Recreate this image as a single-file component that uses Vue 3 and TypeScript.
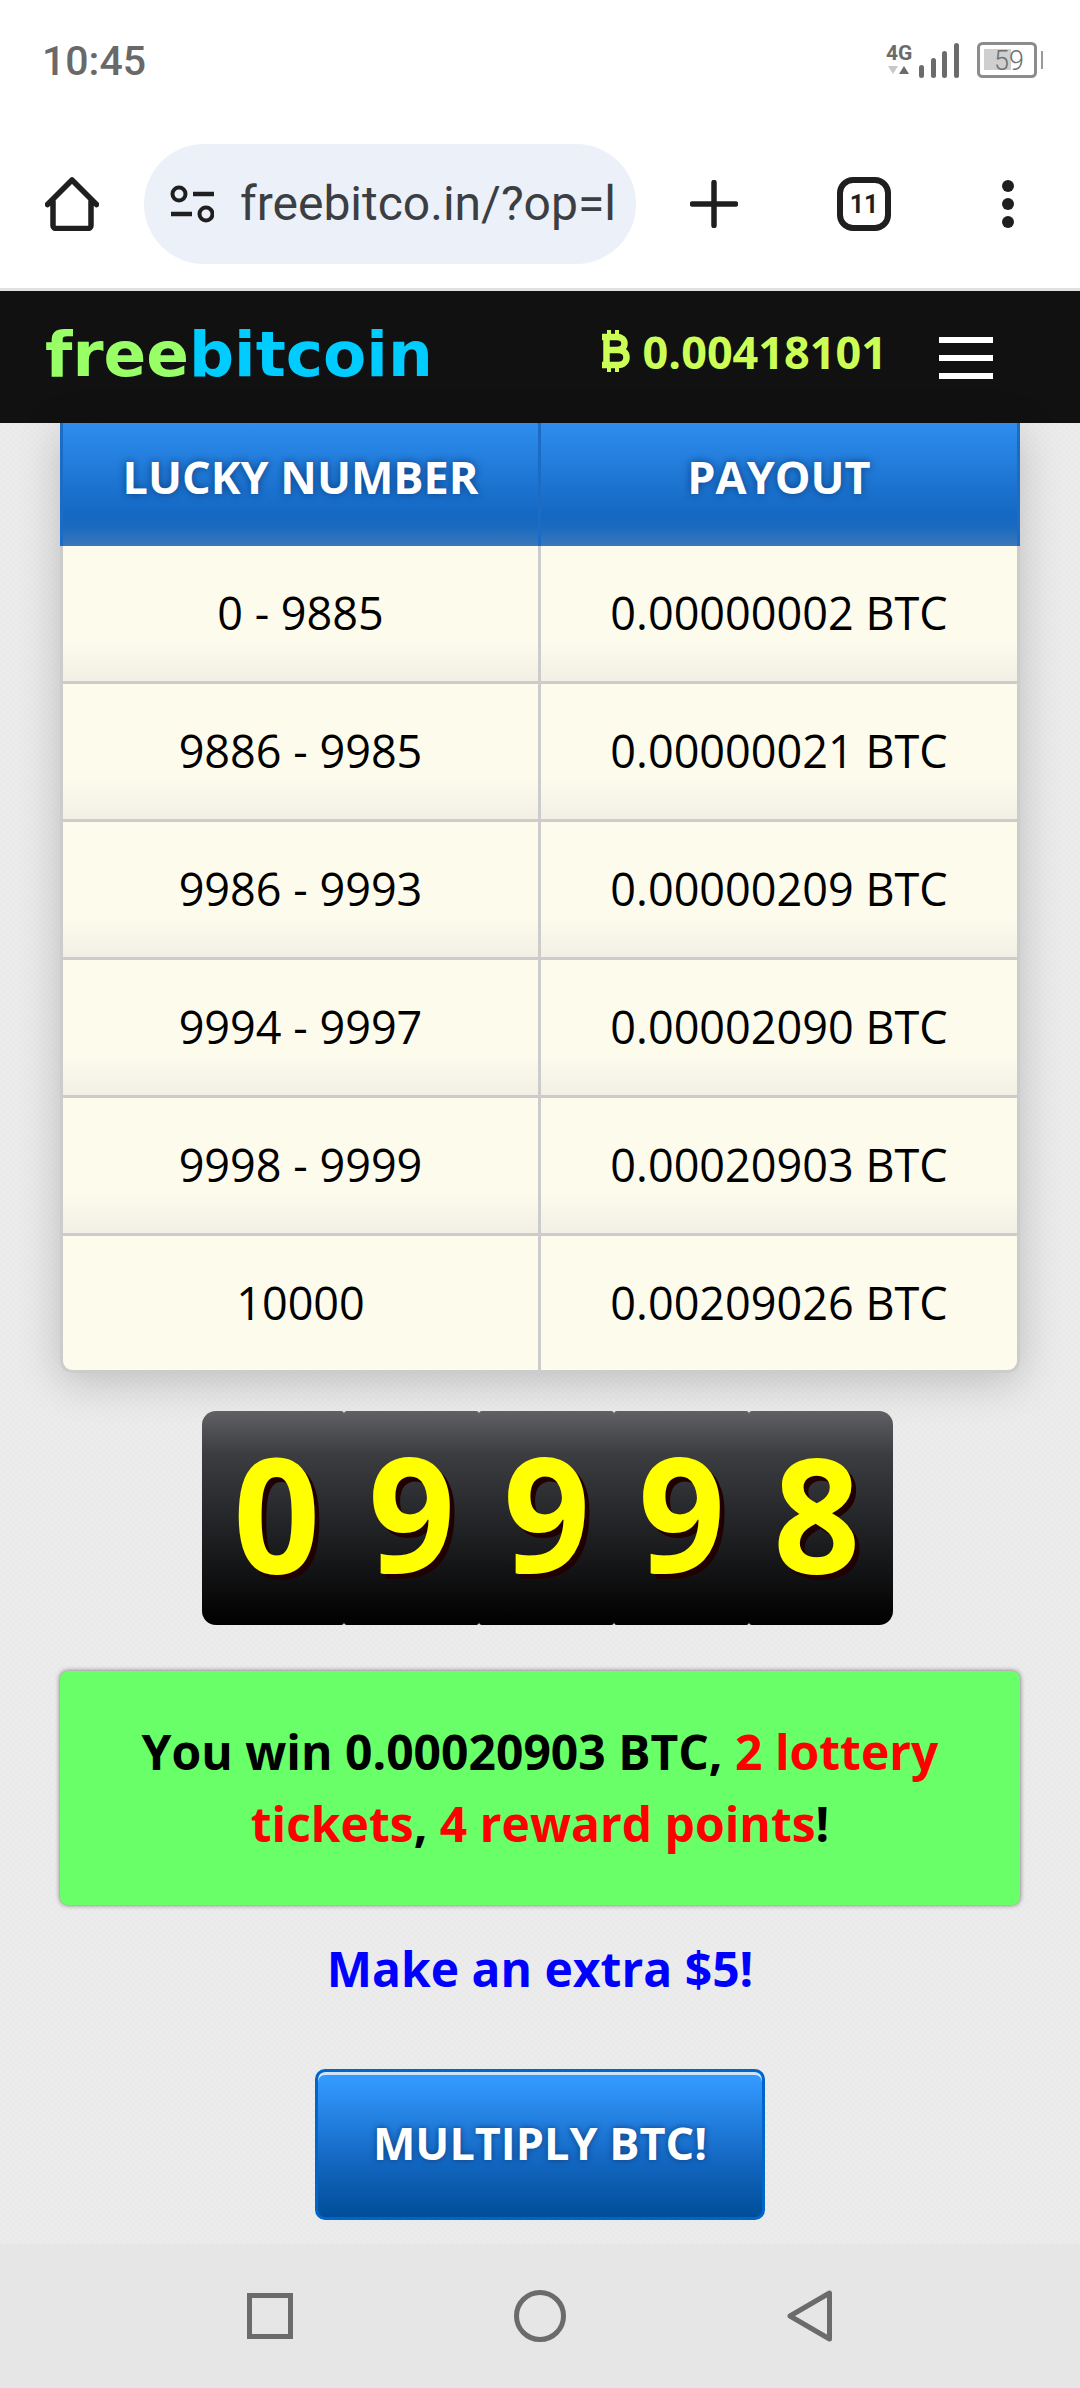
<script setup lang="ts">
interface PayoutRow {
  range: string
  payout: string
}

const rows: PayoutRow[] = [
  { range: '0 - 9885', payout: '0.00000002 BTC' },
  { range: '9886 - 9985', payout: '0.00000021 BTC' },
  { range: '9986 - 9993', payout: '0.00000209 BTC' },
  { range: '9994 - 9997', payout: '0.00002090 BTC' },
  { range: '9998 - 9999', payout: '0.00020903 BTC' },
  { range: '10000', payout: '0.00209026 BTC' },
]

const digits: string[] = ['0', '9', '9', '9', '8']
</script>

<template>
  <div class="phone">
    <div class="status">
      <span class="time">10:45</span>
      <svg class="status-icons" width="160" height="40" viewBox="0 0 160 40">
        <text x="2" y="21" class="net">4G</text>
        <path d="M4 27h10l-5 8z" fill="#c8c8c8" />
        <path d="M15 35l5-8 5 8z" fill="#6b6b6b" />
        <rect x="35" y="26" width="5" height="13" rx="2.5" fill="#6b6b6b" />
        <rect x="47" y="19" width="5" height="20" rx="2.5" fill="#6b6b6b" />
        <rect x="58" y="12" width="5" height="27" rx="2.5" fill="#6b6b6b" />
        <rect x="70" y="4" width="5" height="35" rx="2.5" fill="#6b6b6b" />
        <rect x="94.500" y="4.500" width="57" height="33" rx="4" fill="none" stroke="#8c8c8c" stroke-width="3" />
        <rect x="100" y="10" width="27" height="21" fill="#cfcfcf" />
        <text x="110" y="31" class="batt">59</text>
        <rect x="157" y="12" width="2" height="18" fill="#9a9a9a" />
      </svg>
    </div>

    <div class="toolbar">
      <svg class="home" width="54" height="54" viewBox="0 0 54 54">
        <path d="M2.500 27.500 27 3l24.500 24.500M8 24v24.500a3 3 0 0 0 3 3h32a3 3 0 0 0 3-3V24" fill="none" stroke="#1f1f1f" stroke-width="5.500" stroke-linecap="round" stroke-linejoin="round" />
      </svg>
      <div class="pill">
        <svg width="44" height="38" viewBox="0 0 44 38">
          <circle cx="9" cy="9" r="6.500" fill="none" stroke="#1f1f1f" stroke-width="4" />
          <path d="M23 9h21M1 29h21" stroke="#1f1f1f" stroke-width="4.500" />
          <circle cx="36" cy="29" r="6.500" fill="none" stroke="#1f1f1f" stroke-width="4" />
        </svg>
        <span class="url">freebitco.in/?op=l</span>
      </div>
      <svg class="plus" width="48" height="48" viewBox="0 0 48 48">
        <path d="M2.500 24h43M24 2.500v43" stroke="#1f1f1f" stroke-width="5.500" stroke-linecap="round" />
      </svg>
      <div class="tabs">11</div>
      <svg class="dots" width="12" height="48" viewBox="0 0 12 48">
        <circle cx="6" cy="6" r="6" fill="#1f1f1f" />
        <circle cx="6" cy="24" r="6" fill="#1f1f1f" />
        <circle cx="6" cy="42" r="6" fill="#1f1f1f" />
      </svg>
    </div>

    <header class="site-head">
      <div class="logo"><span class="free">free</span><span class="bitcoin">bitcoin</span></div>
      <div class="balance">
        <svg width="31" height="42" viewBox="0 0 31 42">
          <path d="M3 7h14.500c5 0 8 2.500 8 6.500s-3 6.500-8 6.500H7.500M7.500 20h11.500c5.500 0 8.500 2.800 8.500 7.200s-3 7.800-8.500 7.800H3M7.500 7v28" fill="none" stroke="#ccff55" stroke-width="6.500" />
          <path d="M10 0v7M18 0v7M10 35v7M18 35v7" stroke="#ccff55" stroke-width="4" />
        </svg>
        <span>0.00418101</span>
      </div>
      <div class="burger"><i></i><i></i><i></i></div>
    </header>

    <main class="content">
      <table class="payouts">
        <thead>
          <tr>
            <th>LUCKY NUMBER</th>
            <th>PAYOUT</th>
          </tr>
        </thead>
        <tbody>
          <tr v-for="row in rows" :key="row.range">
            <td>{{ row.range }}</td>
            <td>{{ row.payout }}</td>
          </tr>
        </tbody>
      </table>

      <div class="reel">
        <div v-for="(d, i) in digits" :key="i" class="digit"><span>{{ d }}</span></div>
      </div>

      <div class="win">
        You win 0.00020903 BTC, <span class="red">2 lottery tickets</span>, <span class="red">4 reward points</span>!
      </div>

      <a class="extra">Make an extra $5!</a>

      <button class="multiply">MULTIPLY BTC!</button>
    </main>

    <nav class="navbar">
      <svg width="46" height="46" viewBox="0 0 46 46">
        <rect x="2.500" y="2.500" width="41" height="41" fill="none" stroke="#6b6b6b" stroke-width="5" />
      </svg>
      <svg width="52" height="52" viewBox="0 0 52 52">
        <circle cx="26" cy="26" r="23.500" fill="none" stroke="#6b6b6b" stroke-width="5" />
      </svg>
      <svg width="46" height="52" viewBox="0 0 46 52">
        <path d="M42.500 3v46L3 26z" fill="none" stroke="#6b6b6b" stroke-width="5" stroke-linejoin="round" />
      </svg>
    </nav>
  </div>
</template>

<style>
html,
body {
  margin: 0;
  background: #ebebeb;
}
</style>

<style scoped>
.phone {
  width: 1080px;
  height: 2388px;
  display: flex;
  flex-direction: column;
  overflow: hidden;
  font-family: "Open Sans", sans-serif;
  background: #fff;
}

.status {
  height: 144px;
  flex: none;
  box-sizing: border-box;
  padding: 39px 36px 0 42px;
  display: flex;
  justify-content: space-between;
  align-items: flex-start;
}

.time {
  font: 500 41px/44px Roboto, sans-serif;
  color: #696969;
}

.net {
  font: 700 21px Roboto, sans-serif;
  fill: #6b6b6b;
}

.batt {
  font: 300 27px Roboto, sans-serif;
  fill: #6f6f6f;
}

.toolbar {
  height: 147px;
  flex: none;
  box-sizing: border-box;
  border-bottom: 3px solid #e0e0e0;
  padding: 0 66px 24px 45px;
  display: flex;
  align-items: center;
}

.pill {
  width: 492px;
  height: 120px;
  margin-left: 45px;
  box-sizing: border-box;
  padding-left: 26px;
  border-radius: 60px;
  background: #ecf0f9;
  display: flex;
  align-items: center;
  overflow: hidden;
}

.url {
  display: block;
  margin-left: 26px;
  white-space: nowrap;
  font: 400 48px/60px Roboto, sans-serif;
  color: #3b3e42;
}

.plus {
  margin-left: 54px;
}

.tabs {
  width: 54px;
  height: 54px;
  margin-left: 99px;
  box-sizing: border-box;
  border: 6px solid #1f1f1f;
  border-radius: 16px;
  display: flex;
  align-items: center;
  justify-content: center;
  font: 700 25px Roboto, sans-serif;
  color: #1f1f1f;
}

.dots {
  margin-left: 111px;
}

.site-head {
  height: 132px;
  flex: none;
  background: #111;
  box-sizing: border-box;
  padding: 0 87px 0 45px;
  display: flex;
  align-items: center;
}

.logo {
  margin-top: -6px;
  font: 700 63px/1 "DejaVu Sans", sans-serif;
}

.free {
  color: #99ff66;
}

.bitcoin {
  color: #00ccff;
}

.balance {
  margin-left: auto;
  margin-top: -12px;
  display: flex;
  align-items: center;
  gap: 13px;
  font: 700 45px/1 "Open Sans", sans-serif;
  color: #ccff55;
}

.burger {
  margin-left: 52px;
  width: 54px;
  margin-top: 2px;
  display: flex;
  flex-direction: column;
  gap: 12px;
}

.burger i {
  display: block;
  height: 6px;
  background: #fff;
}

.content {
  flex: 1;
  min-height: 0;
  background: repeating-conic-gradient(#ececec 0 25%, #e9e9e9 0 50%) 0 0 / 6px 6px;
  display: flex;
  flex-direction: column;
  align-items: center;
}

.payouts {
  width: 960px;
  flex: none;
  table-layout: fixed;
  border-collapse: separate;
  border-spacing: 0;
  border-radius: 0 0 12px 12px;
  box-shadow: 0 8px 44px rgba(0, 0, 0, 0.2);
}

.payouts th {
  height: 123px;
  padding: 0 0 16px;
  box-sizing: border-box;
  font-size: 45px;
  font-weight: 700;
  color: #fff;
  text-shadow: 0 0 8px #0a3f80;
  background: linear-gradient(#2e8dee, #1468c2 75%, #1a6abf 85%, #3c78ba);
  border-left: 3px solid #1a6cc4;
}

.payouts th:first-child {
  width: 478px;
}

.payouts th:last-child {
  border-right: 3px solid #1a6cc4;
}

.payouts td {
  height: 138px;
  padding: 0 0 2px;
  box-sizing: border-box;
  text-align: center;
  font-size: 45px;
  font-weight: 380;
  color: #000;
  background: linear-gradient(#fdfbec 70%, #f2f0e5);
  border-left: 3px solid #ccc;
  border-bottom: 3px solid #ccc;
}

.payouts td:last-child {
  border-right: 3px solid #ccc;
}

.payouts tr:last-child td {
  height: 137px;
  background: #fdfbec;
}

.payouts tr:last-child td:first-child {
  border-bottom-left-radius: 12px;
}

.payouts tr:last-child td:last-child {
  border-bottom-right-radius: 12px;
}

.reel {
  margin-top: 38px;
  flex: none;
  display: flex;
  width: 691px;
  height: 214px;
  margin-left: 15px;
}

.digit {
  flex: 1 1 135px;
  height: 214px;
  line-height: 200px;
  border-radius: 3px;
  background: linear-gradient(#606065, #3c3d40 20%, #252629 50%, #000);
  text-align: center;
  font-size: 160px;
  font-weight: 700;
  color: #ff0;
  text-shadow: 5px 5px 0 #200000;
}

.digit span {
  display: inline-block;
  transform: scaleX(0.95);
}

.digit:first-child {
  flex: none;
  box-sizing: border-box;
  width: 142px;
  padding-left: 7px;
  border-radius: 14px 3px 3px 14px;
}

.digit:last-child {
  flex: none;
  box-sizing: border-box;
  width: 144px;
  padding-right: 9px;
  border-radius: 3px 14px 14px 3px;
}

.win {
  margin-top: 46px;
  flex: none;
  width: 960px;
  height: 234px;
  box-sizing: border-box;
  padding: 45px 50px;
  border-radius: 8px;
  background: #68ff68;
  box-shadow: 0 0 5px rgba(0, 0, 0, 0.55);
  text-align: center;
  font-size: 48px;
  line-height: 72px;
  font-weight: 700;
  color: #000;
}

.red {
  color: #f00;
}

.extra {
  display: block;
  margin-top: 28px;
  font-size: 48px;
  line-height: 72px;
  font-weight: 700;
  color: #00f;
}

.multiply {
  margin-top: 64px;
  flex: none;
  width: 450px;
  height: 151px;
  box-sizing: border-box;
  padding: 0 0 4px;
  border: 3px solid #0066cc;
  border-radius: 10px;
  background: linear-gradient(#3399ff, #3399ff 5%, #1468c2 60%, #004e99);
  box-shadow: inset 0 3px 0 #cfe4fb;
  font-family: "Open Sans", sans-serif;
  font-size: 45px;
  font-weight: 700;
  color: #fff;
  text-shadow: 0 0 6px #0a3f80;
}

.navbar {
  height: 144px;
  flex: none;
  background: #e6e6e6;
  box-sizing: border-box;
  padding: 0 247px 0 247px;
  display: flex;
  align-items: center;
  justify-content: space-between;
}
</style>
